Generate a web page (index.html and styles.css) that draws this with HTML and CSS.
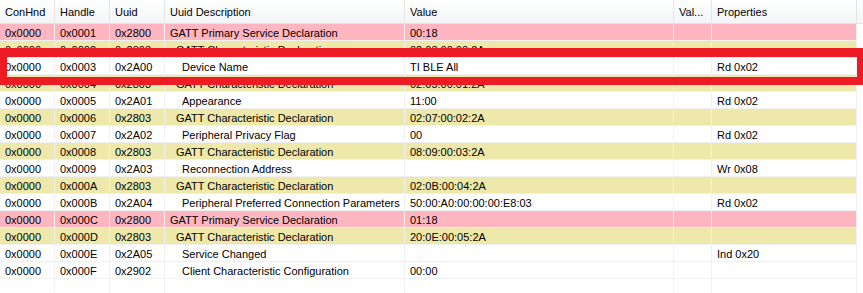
FILE: index.html
```html
<!DOCTYPE html>
<html>
<head>
<meta charset="utf-8">
<link rel="stylesheet" href="styles.css">
</head>
<body>
<div class="grid">
  <div class="hdr">
    <div class="c c1">ConHnd</div>
    <div class="c c2">Handle</div>
    <div class="c c3">Uuid</div>
    <div class="c c4">Uuid Description</div>
    <div class="c c5">Value</div>
    <div class="c c6">Val...</div>
    <div class="c c7">Properties</div>
    <div class="c rest"></div>
  </div>
  <div class="row pink"><div class="c c1">0x0000</div><div class="c c2">0x0001</div><div class="c c3">0x2800</div><div class="c c4">GATT Primary Service Declaration</div><div class="c c5">00:18</div><div class="c c6"></div><div class="c c7"></div></div>
  <div class="row yellow"><div class="c c1">0x0000</div><div class="c c2">0x0002</div><div class="c c3">0x2803</div><div class="c c4 l1">GATT Characteristic Declaration</div><div class="c c5">02:03:00:00:2A</div><div class="c c6"></div><div class="c c7"></div></div>
  <div class="row"><div class="c c1">0x0000</div><div class="c c2">0x0003</div><div class="c c3">0x2A00</div><div class="c c4 l2">Device Name</div><div class="c c5">TI BLE All</div><div class="c c6"></div><div class="c c7">Rd 0x02</div></div>
  <div class="row yellow"><div class="c c1">0x0000</div><div class="c c2">0x0004</div><div class="c c3">0x2803</div><div class="c c4 l1">GATT Characteristic Declaration</div><div class="c c5">02:05:00:01:2A</div><div class="c c6"></div><div class="c c7"></div></div>
  <div class="row"><div class="c c1">0x0000</div><div class="c c2">0x0005</div><div class="c c3">0x2A01</div><div class="c c4 l2">Appearance</div><div class="c c5">11:00</div><div class="c c6"></div><div class="c c7">Rd 0x02</div></div>
  <div class="row yellow"><div class="c c1">0x0000</div><div class="c c2">0x0006</div><div class="c c3">0x2803</div><div class="c c4 l1">GATT Characteristic Declaration</div><div class="c c5">02:07:00:02:2A</div><div class="c c6"></div><div class="c c7"></div></div>
  <div class="row"><div class="c c1">0x0000</div><div class="c c2">0x0007</div><div class="c c3">0x2A02</div><div class="c c4 l2">Peripheral Privacy Flag</div><div class="c c5">00</div><div class="c c6"></div><div class="c c7">Rd 0x02</div></div>
  <div class="row yellow"><div class="c c1">0x0000</div><div class="c c2">0x0008</div><div class="c c3">0x2803</div><div class="c c4 l1">GATT Characteristic Declaration</div><div class="c c5">08:09:00:03:2A</div><div class="c c6"></div><div class="c c7"></div></div>
  <div class="row"><div class="c c1">0x0000</div><div class="c c2">0x0009</div><div class="c c3">0x2A03</div><div class="c c4 l2">Reconnection Address</div><div class="c c5"></div><div class="c c6"></div><div class="c c7">Wr 0x08</div></div>
  <div class="row yellow"><div class="c c1">0x0000</div><div class="c c2">0x000A</div><div class="c c3">0x2803</div><div class="c c4 l1">GATT Characteristic Declaration</div><div class="c c5">02:0B:00:04:2A</div><div class="c c6"></div><div class="c c7"></div></div>
  <div class="row"><div class="c c1">0x0000</div><div class="c c2">0x000B</div><div class="c c3">0x2A04</div><div class="c c4 l2">Peripheral Preferred Connection Parameters</div><div class="c c5">50:00:A0:00:00:00:E8:03</div><div class="c c6"></div><div class="c c7">Rd 0x02</div></div>
  <div class="row pink"><div class="c c1">0x0000</div><div class="c c2">0x000C</div><div class="c c3">0x2800</div><div class="c c4">GATT Primary Service Declaration</div><div class="c c5">01:18</div><div class="c c6"></div><div class="c c7"></div></div>
  <div class="row yellow"><div class="c c1">0x0000</div><div class="c c2">0x000D</div><div class="c c3">0x2803</div><div class="c c4 l1">GATT Characteristic Declaration</div><div class="c c5">20:0E:00:05:2A</div><div class="c c6"></div><div class="c c7"></div></div>
  <div class="row"><div class="c c1">0x0000</div><div class="c c2">0x000E</div><div class="c c3">0x2A05</div><div class="c c4 l2">Service Changed</div><div class="c c5"></div><div class="c c6"></div><div class="c c7">Ind 0x20</div></div>
  <div class="row"><div class="c c1">0x0000</div><div class="c c2">0x000F</div><div class="c c3">0x2902</div><div class="c c4 l2">Client Characteristic Configuration</div><div class="c c5">00:00</div><div class="c c6"></div><div class="c c7"></div></div>
  <div class="row filler"><div class="c c1"></div><div class="c c2"></div><div class="c c3"></div><div class="c c4"></div><div class="c c5"></div><div class="c c6"></div><div class="c c7"></div></div>
  <div class="mark"></div>
</div>
</body>
</html>
```
FILE: styles.css
```css
html, body {
  margin: 0;
  padding: 0;
  background: #ffffff;
  overflow: hidden;
}
.grid {
  position: relative;
  width: 863px;
  height: 293px;
  overflow: hidden;
  font-family: "Liberation Sans", Arial, sans-serif;
  font-size: 11px;
  color: #000;
}
.hdr {
  display: flex;
  height: 23px;
  border-bottom: 1px solid #e5e5e5;
  background: linear-gradient(#ffffff, #f3f4f6);
}
.hdr .c {
  height: 23px;
  line-height: 14px;
  padding: 5px 0 0 5px;
  border-right: 1px solid #e5e5e5;
}
.hdr .rest {
  flex: 1;
  border-right: none;
}
.row {
  display: flex;
  height: 16px;
  border-bottom: 1px solid #f0f0f0;
  width: 857px;
  background: #ffffff;
}
.row .c {
  height: 16px;
  line-height: 14px;
  padding: 2px 0 0 5px;
  border-right: 1px solid #f0f0f0;
}
.c {
  box-sizing: border-box;
  white-space: pre;
  overflow: hidden;
  flex: none;
}
.c1 { width: 55px; }
.c2 { width: 55px; }
.c3 { width: 55px; }
.c4 { width: 240px; }
.c5 { width: 269px; }
.c6 { width: 38px; }
.c7 { width: 145px; }
.row .l1 { padding-left: 11px; }
.row .l2 { padding-left: 17px; }
.pink { background: #ffb6c1; }
.yellow { background: #eee8aa; }
.filler {
  height: 40px;
  border-bottom: none;
}
.filler .c { height: 40px; }
.mark {
  position: absolute;
  left: 0;
  top: 48px;
  width: 867px;
  height: 37px;
  box-sizing: border-box;
  border-style: solid;
  border-color: #ed1c24;
  border-width: 9px 10px 8px 7px;
}
```
